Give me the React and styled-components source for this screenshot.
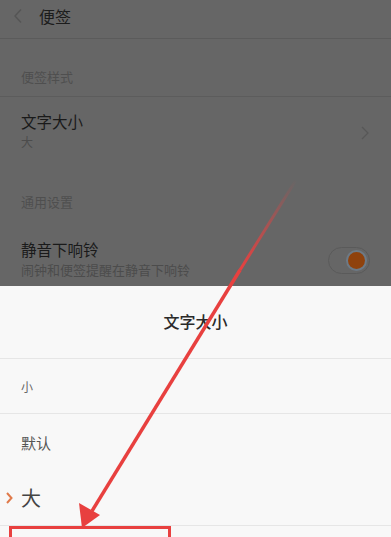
import React from 'react';
import styled, { createGlobalStyle } from 'styled-components';

const GlobalStyle = createGlobalStyle`
  html, body {
    margin: 0;
    padding: 0;
    background: #666;
  }
  * { box-sizing: border-box; }
`;

const Screen = styled.div`
  position: relative;
  width: 391px;
  height: 537px;
  overflow: hidden;
  background: #666;
  font-family: "Noto Sans CJK SC", "Noto Sans", sans-serif;
`;

const Header = styled.div`
  height: 39px;
  display: flex;
  align-items: center;
  gap: 16px;
  padding: 0 0 6px 13px;
  border-bottom: 1px solid #5b5b5b;
`;

const HeaderTitle = styled.div`
  font-size: 16px;
  color: #1c1c1c;
`;

const SectionLabel = styled.div`
  height: ${(p) => p.$h}px;
  display: flex;
  align-items: flex-end;
  padding: 0 0 10px 21px;
  font-size: 13px;
  color: #4f4f4f;
  border-bottom: ${(p) => (p.$line ? '1px solid #5c5c5c' : 'none')};
`;

const Item = styled.div`
  height: ${(p) => p.$h}px;
  display: flex;
  align-items: center;
  justify-content: space-between;
  padding: ${(p) => p.$pt || 0}px 22px 0 21px;
`;

const ItemText = styled.div`
  display: flex;
  flex-direction: column;
  gap: 1px;
`;

const ItemTitle = styled.div`
  font-size: 15.5px;
  color: #1a1a1a;
  line-height: 20px;
`;

const ItemSub = styled.div`
  font-size: ${(p) => p.$size || 13}px;
  color: #4c4c4c;
  line-height: 20px;
`;

const Toggle = styled.div`
  width: 42px;
  height: 27px;
  border-radius: 14px;
  border: 1px solid #5a5a5a;
  display: flex;
  align-items: center;
  justify-content: flex-end;
  padding-right: 4px;
  margin-right: -1px;
  margin-top: 2px;
`;

const Knob = styled.div`
  width: 17px;
  height: 17px;
  border-radius: 50%;
  background: #8f420d;
  box-shadow: 0 0 0 2px #6d7a86;
`;

const Sheet = styled.div`
  position: absolute;
  left: 0;
  right: 0;
  top: 286px;
  bottom: 0;
  background: #f8f8f8;
`;

const SheetTitle = styled.div`
  height: 73px;
  display: flex;
  align-items: center;
  justify-content: center;
  font-size: 16px;
  font-weight: 500;
  color: #2a2a2a;
  padding-bottom: 2px;
  border-bottom: 1px solid #e6e6e6;
`;

const Option = styled.div`
  position: relative;
  height: ${(p) => p.$h}px;
  display: flex;
  align-items: center;
  padding-left: 21px;
  font-size: ${(p) => p.$size}px;
  color: ${(p) => p.$color};
  border-bottom: ${(p) => (p.$line ? '1px solid #e6e6e6' : 'none')};
`;

const Mark = styled.svg`
  position: absolute;
  left: 6px;
  top: 50%;
  margin-top: -6px;
`;

const Annotation = styled.svg`
  position: absolute;
  left: 0;
  top: 0;
  pointer-events: none;
`;

const RedBox = styled.div`
  position: absolute;
  left: 9px;
  top: 526px;
  width: 162px;
  height: 40px;
  border: 3px solid #e8403f;
`;

export default function App() {
  return (
    <>
      <GlobalStyle />
      <Screen>
        <Header>
          <svg width="10" height="16" viewBox="0 0 10 16">
            <path d="M8 1.5 L2 8 L8 14.5" fill="none" stroke="#555" strokeWidth="1.4" />
          </svg>
          <HeaderTitle>便签</HeaderTitle>
        </Header>
        <SectionLabel $h={58} $line>便签样式</SectionLabel>
        <Item $h={68}>
          <ItemText>
            <ItemTitle>文字大小</ItemTitle>
            <ItemSub $size={12}>大</ItemSub>
          </ItemText>
          <svg width="8" height="14" viewBox="0 0 8 14" style={{ marginTop: 3 }}>
            <path d="M1 1 L7 7 L1 13" fill="none" stroke="#575757" strokeWidth="1.3" />
          </svg>
        </Item>
        <SectionLabel $h={56}>通用设置</SectionLabel>
        <Item $h={72} $pt={4}>
          <ItemText>
            <ItemTitle>静音下响铃</ItemTitle>
            <ItemSub>闹钟和便签提醒在静音下响铃</ItemSub>
          </ItemText>
          <Toggle>
            <Knob />
          </Toggle>
        </Item>

        <Sheet>
          <SheetTitle>文字大小</SheetTitle>
          <Option $h={55} $size={12} $color="#666" $line>小</Option>
          <Option $h={56} $size={15} $color="#555">默认</Option>
          <Option $h={56} $size={20} $color="#444" $line>
            <Mark width="7" height="12" viewBox="0 0 7 12">
              <path d="M1 1 L5.5 6 L1 11" fill="none" stroke="#e07a4a" strokeWidth="2" />
            </Mark>
            大
          </Option>
        </Sheet>

        <RedBox />
        <Annotation width="391" height="537" viewBox="0 0 391 537">
          <defs>
            <linearGradient id="fade" x1="296" y1="180" x2="240" y2="270" gradientUnits="userSpaceOnUse">
              <stop offset="0" stopColor="#e8403f" stopOpacity="0" />
              <stop offset="1" stopColor="#e8403f" stopOpacity="1" />
            </linearGradient>
          </defs>
          <line x1="296" y1="180" x2="240" y2="270" stroke="url(#fade)" strokeWidth="3" />
          <line x1="240" y1="270" x2="92" y2="511" stroke="#e8403f" strokeWidth="3.5" />
          <polygon points="82,528 79,503 100,515" fill="#e8403f" />
        </Annotation>
      </Screen>
    </>
  );
}
